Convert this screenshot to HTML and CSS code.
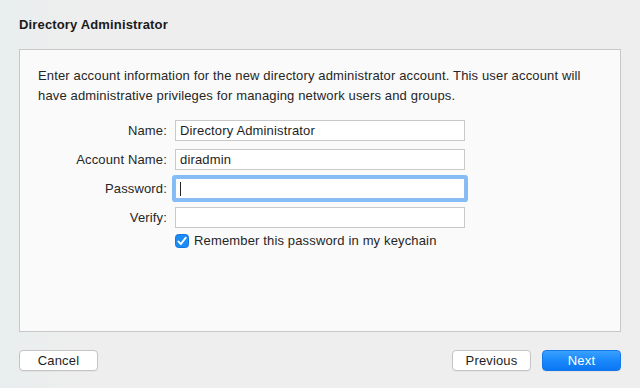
FILE: index.html
```html
<!DOCTYPE html>
<html lang="en">
<head>
  <meta charset="UTF-8">
  <meta name="viewport" content="width=device-width, initial-scale=1.0">
  <title>Directory Administrator</title>
  <link rel="stylesheet" href="styles.css">
</head>
<body>

<div class="window">
  <h1 class="title">Directory Administrator</h1>

  <div class="panel">
    <p class="intro">Enter account information for the new directory administrator account. This user account will have administrative privileges for managing network users and groups.</p>

    <div class="form">
      <label class="label">Name:</label>
      <div class="field">Directory Administrator</div>

      <label class="label">Account Name:</label>
      <div class="field">diradmin</div>

      <label class="label">Password:</label>
      <div class="field focused"><span class="caret"></span></div>

      <label class="label">Verify:</label>
      <div class="field"></div>

      <div class="check-row">
        <svg class="checkbox" width="14" height="14" viewBox="0 0 14 14">
          <rect x="0.5" y="0.5" width="13" height="13" rx="3" fill="#1b8bf5" stroke="#1275e0"/>
          <path d="M3.3 7.4 L5.9 10 L10.8 3.6" fill="none" stroke="#fff" stroke-width="1.8" stroke-linecap="round" stroke-linejoin="round"/>
        </svg>
        <span>Remember this password in my keychain</span>
      </div>
    </div>
  </div>

  <div class="buttons">
    <button class="btn">Cancel</button>
    <div class="btn-group">
      <button class="btn">Previous</button>
      <button class="btn primary">Next</button>
    </div>
  </div>
</div>

</body>
</html>
```

FILE: styles.css
```css
body {
  margin: 0;
  background-color: #ececec;
  font-family: "Liberation Sans", Arial, sans-serif;
  font-size: 13px;
  letter-spacing: 0.15px;
  color: #1e1e1e;
}

.window {
  width: 640px;
  height: 388px;
  padding: 0 19px;
  box-sizing: border-box;
  background: linear-gradient(90deg, #e9eeee 0%, #eeeeee 12%, #eeeeee 100%);
}

.title {
  margin: 0;
  padding-top: 17px;
  height: 49px;
  box-sizing: border-box;
  font-size: 13px;
  line-height: 16px;
  font-weight: bold;
  color: #1a1a1a;
}

/* White content box */
.panel {
  height: 283px;
  box-sizing: border-box;
  background-color: #fafafa;
  border: 1px solid #c8c8c8;
  padding: 16px 18px 0 18px;
}

.intro {
  margin: 0;
  line-height: 20px;
  color: #262626;
}

.form {
  display: grid;
  grid-template-columns: 129px 290px;
  column-gap: 8px;
  row-gap: 8px;
  margin-top: 14px;
}

.label {
  text-align: right;
  line-height: 21px;
  color: #262626;
}

.field {
  height: 21px;
  box-sizing: border-box;
  border: 1px solid #c9c9c9;
  background-color: #fff;
  padding-left: 4px;
  line-height: 19px;
  color: #1e1e1e;
  position: relative;
}

.field.focused {
  border-color: #8cbcf0;
  box-shadow: 0 0 0 3px #84bdf5;
  border-radius: 1px;
}

.caret {
  position: absolute;
  left: 4px;
  top: 3px;
  width: 1px;
  height: 14px;
  background-color: #222;
}

.check-row {
  grid-column: 2;
  display: flex;
  align-items: center;
  gap: 5px;
  margin-top: -3px;
  line-height: 16px;
  color: #262626;
}

.checkbox {
  flex: 0 0 auto;
}

.buttons {
  display: flex;
  justify-content: space-between;
  margin-top: 18px;
}

.btn-group {
  display: flex;
  gap: 11px;
}

.btn {
  width: 79px;
  height: 21px;
  padding: 0;
  border: 1px solid #c4c4c4;
  border-radius: 4px;
  background-color: #fff;
  font-family: "Liberation Sans", Arial, sans-serif;
  font-size: 13px;
  letter-spacing: 0.15px;
  color: #1e1e1e;
  box-shadow: 0 1px 0 rgba(0, 0, 0, 0.04);
}

.btn.primary {
  border-color: #1477ea;
  background: linear-gradient(180deg, #3aa1ff 0%, #1a88fb 50%, #0b76f3 100%);
  color: #fff;
}
```
